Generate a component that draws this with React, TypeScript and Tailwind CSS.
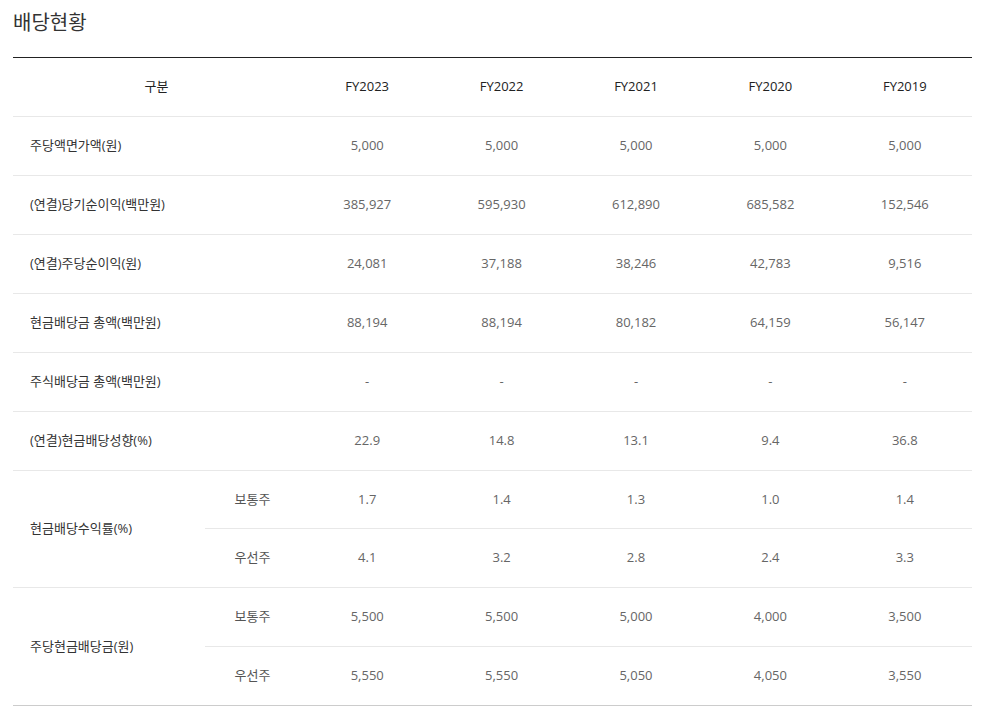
import React from "react"

const years = ["FY2023", "FY2022", "FY2021", "FY2020", "FY2019"]

const simpleRows: { label: string; values: string[] }[] = [
  { label: "주당액면가액(원)", values: ["5,000", "5,000", "5,000", "5,000", "5,000"] },
  { label: "(연결)당기순이익(백만원)", values: ["385,927", "595,930", "612,890", "685,582", "152,546"] },
  { label: "(연결)주당순이익(원)", values: ["24,081", "37,188", "38,246", "42,783", "9,516"] },
  { label: "현금배당금 총액(백만원)", values: ["88,194", "88,194", "80,182", "64,159", "56,147"] },
  { label: "주식배당금 총액(백만원)", values: ["-", "-", "-", "-", "-"] },
  { label: "(연결)현금배당성향(%)", values: ["22.9", "14.8", "13.1", "9.4", "36.8"] },
]

const splitRows: { label: string; sub: { name: string; values: string[] }[] }[] = [
  {
    label: "현금배당수익률(%)",
    sub: [
      { name: "보통주", values: ["1.7", "1.4", "1.3", "1.0", "1.4"] },
      { name: "우선주", values: ["4.1", "3.2", "2.8", "2.4", "3.3"] },
    ],
  },
  {
    label: "주당현금배당금(원)",
    sub: [
      { name: "보통주", values: ["5,500", "5,500", "5,000", "4,000", "3,500"] },
      { name: "우선주", values: ["5,550", "5,550", "5,050", "4,050", "3,550"] },
    ],
  },
]

export default function App() {
  return (
    <div className="bg-white min-h-[718px] px-[13px] pt-[9px] font-['Open_Sans','Noto_Sans_CJK_KR',sans-serif]">
      <h2 className="text-[20px] leading-[28px] text-[#333] font-normal mb-[20px]">배당현황</h2>
      <table className="w-[959px] table-fixed border-collapse border-t border-[#222] text-[13px]">
        <colgroup>
          <col className="w-[192px]" />
          <col className="w-[95px]" />
          {years.map((y) => (
            <col key={y} />
          ))}
        </colgroup>
        <thead>
          <tr className="h-[59px] border-b border-[#e8e8e8]">
            <th colSpan={2} className="font-normal text-[#222] text-center">구분</th>
            {years.map((y) => (
              <th key={y} className="font-normal text-[#222] text-center">{y}</th>
            ))}
          </tr>
        </thead>
        <tbody>
          {simpleRows.map((r) => (
            <tr key={r.label} className="h-[59px] border-b border-[#e8e8e8]">
              <td colSpan={2} className="pl-[17px] text-[#333]">{r.label}</td>
              {r.values.map((v, i) => (
                <td key={i} className="text-center text-[#666]">{v}</td>
              ))}
            </tr>
          ))}
          {splitRows.map((g, gi) => {
            const last = gi === splitRows.length - 1
            return g.sub.map((s, si) => (
              <tr
                key={g.label + s.name}
                className={
                  si === 0
                    ? gi === 0
                      ? "h-[58px] border-b border-[#e8e8e8]"
                      : "h-[59px] border-b border-[#e8e8e8]"
                    : last
                    ? "h-[59px] border-b border-[#ccc]"
                    : "h-[59px] border-b border-[#e8e8e8]"
                }
              >
                {si === 0 && (
                  <td
                    rowSpan={2}
                    className={
                      last
                        ? "pl-[17px] text-[#333] border-b border-[#ccc]"
                        : "pl-[17px] text-[#333] border-b border-[#e8e8e8]"
                    }
                  >
                    {g.label}
                  </td>
                )}
                <td className="text-center text-[#555]">{s.name}</td>
                {s.values.map((v, i) => (
                  <td key={i} className="text-center text-[#666]">{v}</td>
                ))}
              </tr>
            ))
          })}
        </tbody>
      </table>
    </div>
  )
}
